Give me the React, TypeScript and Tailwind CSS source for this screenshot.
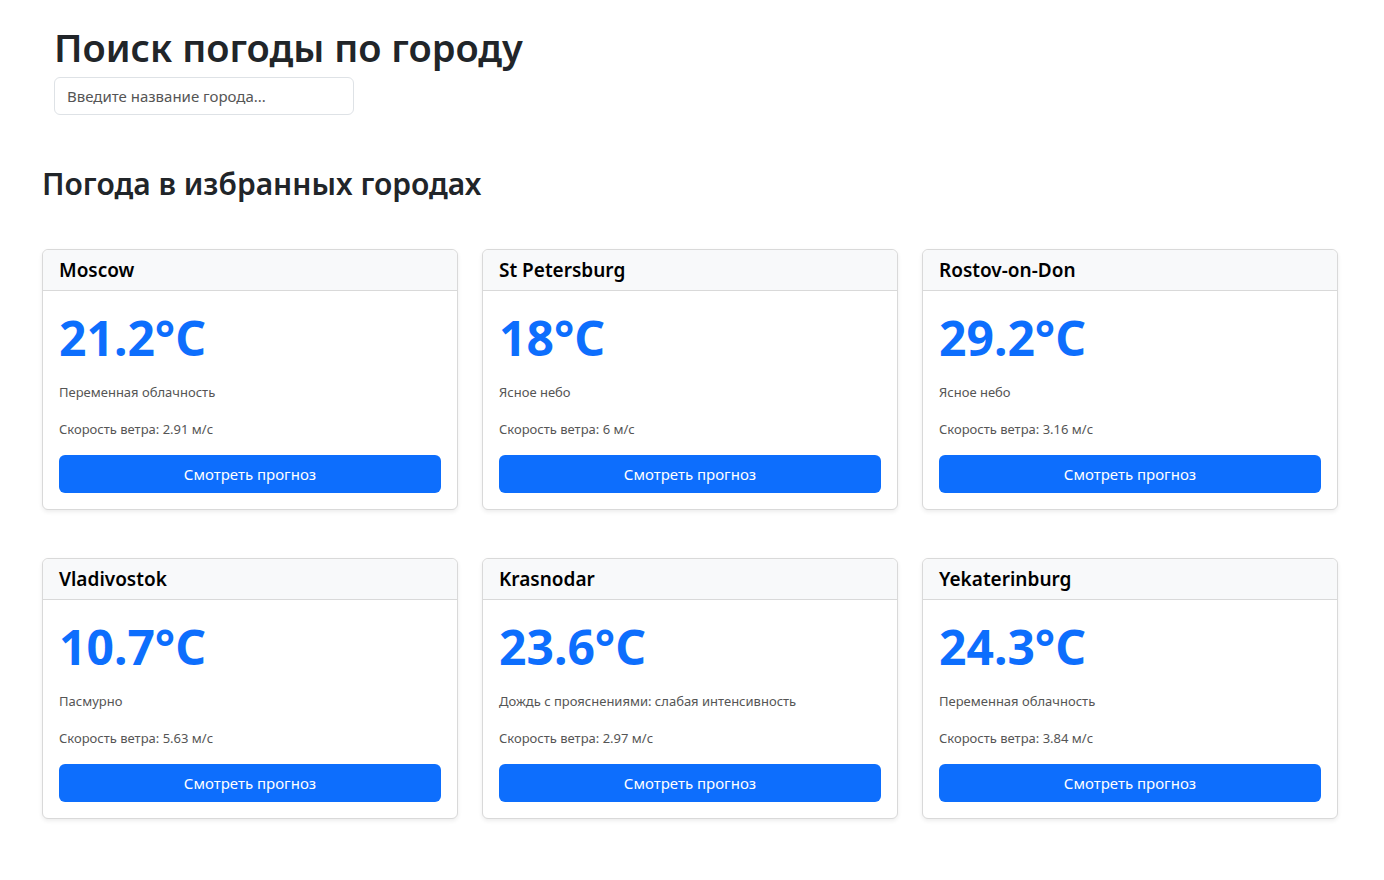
import React from 'react'

const cities = [
  { name: 'Moscow', temp: '21.2°C', desc: 'Переменная облачность', wind: '2.91' },
  { name: 'St Petersburg', temp: '18°C', desc: 'Ясное небо', wind: '6' },
  { name: 'Rostov-on-Don', temp: '29.2°C', desc: 'Ясное небо', wind: '3.16' },
  { name: 'Vladivostok', temp: '10.7°C', desc: 'Пасмурно', wind: '5.63' },
  { name: 'Krasnodar', temp: '23.6°C', desc: 'Дождь с прояснениями: слабая интенсивность', wind: '2.97' },
  { name: 'Yekaterinburg', temp: '24.3°C', desc: 'Переменная облачность', wind: '3.84' },
]

function CityCard({ city }: { city: (typeof cities)[number] }) {
  return (
    <div className="flex flex-col rounded-md border border-[#d9d9d9] bg-white shadow-[0_2px_4px_rgba(0,0,0,0.075)]">
      <div className="h-[41px] flex items-center px-4 bg-[#f8f9fa] border-b border-[#d9d9d9] rounded-t-md">
        <h5 className="text-[19px] font-semibold text-black leading-none">{city.name}</h5>
      </div>
      <div className="px-4 pt-[19px] pb-4 flex flex-col">
        <div className="text-[48px] font-bold text-[#0d6efd] leading-[56px]">{city.temp}</div>
        <p className="mt-[16px] text-[13px] text-[#555] leading-5">{city.desc}</p>
        <p className="mt-[17px] text-[13px] text-[#555] leading-5">Скорость ветра: {city.wind} м/с</p>
        <button className="mt-[16px] h-[38px] w-full rounded-md bg-[#0d6efd] text-white text-[15px]">
          Смотреть прогноз
        </button>
      </div>
    </div>
  )
}

export default function App() {
  return (
    <div className="min-h-[880px] bg-white text-[#212529]" style={{ fontFamily: '"Noto Sans", "Open Sans", sans-serif' }}>
      <div className="px-[54px] pt-[23px]">
        <h1 className="text-[38px] font-semibold leading-[49px] text-[#212529]">Поиск погоды по городу</h1>
        <input
          type="text"
          placeholder="Введите название города..."
          className="mt-[5px] w-[300px] h-[38px] rounded-md border border-[#dee2e6] px-3 text-[15px] placeholder:text-[#555] outline-none"
        />
      </div>
      <div className="pl-[42px]">
        <h2 className="mt-[49px] text-[30px] font-semibold leading-[40px] text-[#212529]">Погода в избранных городах</h2>
        <div className="mt-[45px] w-[1296px] grid grid-cols-3 gap-x-[24px] gap-y-[48px]">
          {cities.map((c) => (
            <CityCard key={c.name} city={c} />
          ))}
        </div>
      </div>
    </div>
  )
}
